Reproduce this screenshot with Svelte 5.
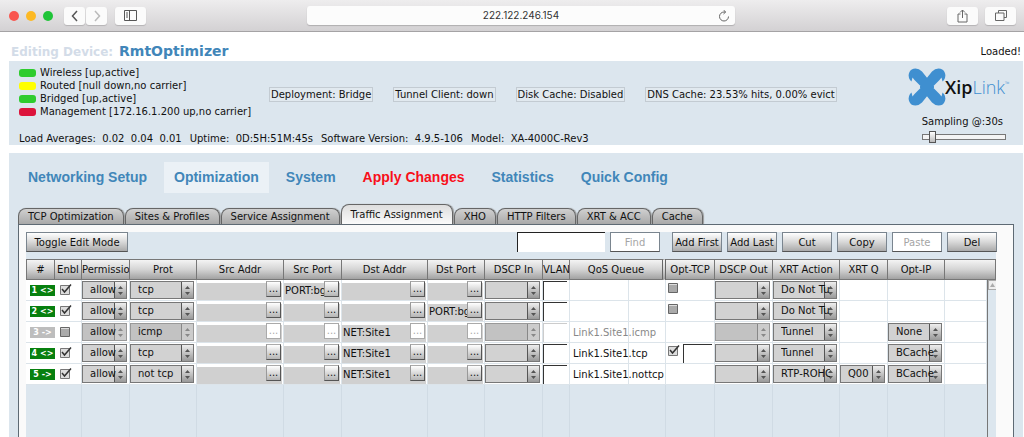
<script>
  const links = [
    { name: 'Wireless [up,active]', color: '#2ecc2e' },
    { name: 'Routed [null down,no carrier]', color: '#ffff00' },
    { name: 'Bridged [up,active]', color: '#2ecc2e' },
    { name: 'Management [172.16.1.200 up,no carrier]', color: '#dc143c' }
  ];
  const statuses = [
    'Deployment: Bridge',
    'Tunnel Client: down',
    'Disk Cache: Disabled',
    'DNS Cache: 23.53% hits, 0.00% evict'
  ];
  const facts = [
    ['Load Averages:', '0.02\u00a0 0.04\u00a0 0.01'],
    ['Uptime:', '0D:5H:51M:45s'],
    ['Software Version:', '4.9.5-106'],
    ['Model:', 'XA-4000C-Rev3']
  ];
  const menu = ['Networking Setup', 'Optimization', 'System', 'Apply Changes', 'Statistics', 'Quick Config'];
  const tabs = [
    'TCP Optimization', 'Sites & Profiles', 'Service Assignment', 'Traffic Assignment',
    'XHO', 'HTTP Filters', 'XRT & ACC', 'Cache'
  ];
  const actions = ['Add First', 'Add Last', 'Cut', 'Copy', 'Paste', 'Del'];
  const corners = ['', 'matrix(-1 0 0 1 38 0)', 'matrix(1 0 0 -1 0 38)', 'matrix(-1 0 0 -1 38 38)'];
  const columns = [
    ['#', 29], ['Enbl', 27], ['Permission', 48], ['Prot', 67], ['Src Addr', 87], ['Src Port', 58],
    ['Dst Addr', 86], ['Dst Port', 57], ['DSCP In', 58], ['VLAN', 27], ['QoS Queue', 96],
    ['Opt-TCP', 49], ['DSCP Out', 58], ['XRT Action', 67], ['XRT Q', 48], ['Opt-IP', 57]
  ];
  const rows = [
    { tag: '1 <>', on: true, prot: 'tcp', srcPort: 'PORT:bgp', opt: 'off', action: 'Do Not Tunnel' },
    { tag: '2 <>', on: true, prot: 'tcp', dstPort: 'PORT:bgp', opt: 'off', action: 'Do Not Tunnel' },
    { tag: '3 ->', on: false, prot: 'icmp', dst: 'NET:Site1', qos: 'Link1.Site1.icmp', action: 'Tunnel', ip: 'None' },
    { tag: '4 <>', on: true, prot: 'tcp', dst: 'NET:Site1', qos: 'Link1.Site1.tcp', opt: 'on', action: 'Tunnel', ip: 'BCache' },
    { tag: '5 ->', on: true, prot: 'not tcp', dst: 'NET:Site1', qos: 'Link1.Site1.nottcp', action: 'RTP-ROHC', q: 'Q00', ip: 'BCache' }
  ];
</script>

{#snippet pick(label, value, off)}
  <select aria-label={label} disabled={off}><option>{value}</option></select>
{/snippet}

{#snippet address(label, value, off)}
  <div class="addr">
    <input type="text" aria-label={label} value={value ?? ''} />
    <button disabled={off} aria-label="Choose {label}">...</button>
  </div>
{/snippet}

<div class="page">
  <header class="browser">
    <div class="lights"><i class="red"></i><i class="amber"></i><i class="green"></i></div>
    <div class="pair">
      <button class="chrome" aria-label="Back"><svg width="8" height="12" viewBox="0 0 8 12"><path d="M6 1 1.500 6 6 11" stroke="#555" /></svg></button>
      <button class="chrome" aria-label="Forward"><svg width="8" height="12" viewBox="0 0 8 12"><path d="M2 1 6.500 6 2 11" stroke="#bbb" /></svg></button>
    </div>
    <button class="chrome wide" aria-label="Sidebar"><svg width="13" height="11" viewBox="0 0 13 11"><path d="M.5.5h12v10H.5zM5.500.5v10M2 3h2M2 5h2M2 7h2" stroke="#555" stroke-width="1" /></svg></button>
    <div class="url">
      <span>222.122.246.154</span>
      <button aria-label="Reload"><svg width="12" height="12" viewBox="0 0 12 12"><path d="M10.500 6.500A4.500 4.500 0 1 1 6 2h1.500M5.500 0l2.200 2-2.200 2" stroke="#666" stroke-width="1" /></svg></button>
    </div>
    <div class="right">
      <button class="chrome wide" aria-label="Share"><svg width="11" height="14" viewBox="0 0 11 14"><path d="M3.500 5H1v8h9V5H7.500M5.500 9V1M3 3.500 5.500 1 8 3.500" stroke="#666" stroke-width="1" /></svg></button>
      <button class="chrome wide" aria-label="Tabs"><svg width="12" height="11" viewBox="0 0 12 11"><path d="M3.500 3V.5h8v7H9M.5 3h8.500v7.500H.5z" stroke="#666" stroke-width="1" /></svg></button>
    </div>
  </header>

  <div class="title">
    <h1><span>Editing Device:</span> RmtOptimizer</h1>
    <span class="loaded">Loaded!</span>
  </div>

  <section class="info">
    <div class="top">
      <ul class="links">
        {#each links as link}
          <li><i style="background: {link.color}"></i>{link.name}</li>
        {/each}
      </ul>
      <div class="statuses">
        {#each statuses as status}<span>{status}</span>{/each}
      </div>
    </div>
    <div class="facts">
      {#each facts as [label, value]}<span>{label}&nbsp; {value}</span>{/each}
    </div>
    <div class="brand">
      <div class="logo">
        <svg width="38" height="38" viewBox="0 0 38 38">
          {#each corners as corner}
            <path transform={corner} fill="#3f8fd0" d="M20 11 14 3.500Q11 .5 7.500 .5 3 .5 1.500 4 -.5 8 2 12L3.500 13.500 4.500 9.500 6.500 12 12.500 18 12 20 20 20Z" />
          {/each}
        </svg>
        <span class="word"><b>Xip</b>Link<sup>™</sup></span>
      </div>
      <label for="sampling">Sampling @:30s</label>
      <input id="sampling" type="range" min="0" max="100" value="9" />
    </div>
  </section>

  <main>
    <nav class="menu">
      {#each menu as item, i}
        <a href="#{i}" class:current={i === 1} class:alert={i === 3}>{item}</a>
      {/each}
    </nav>

    <div class="tabs" role="tablist">
      {#each tabs as tab, i}
        <button role="tab" aria-selected={i === 3} class:active={i === 3}>{tab}</button>
      {/each}
    </div>

    <section class="panel">
      <div class="toolbar">
        <button class="toggle">Toggle Edit Mode</button>
        <input type="text" class="search" aria-label="Find text" />
        <button disabled>Find</button>
        <div class="actions">
          {#each actions as action}<button disabled={action === 'Paste'}>{action}</button>{/each}
        </div>
      </div>

      <table>
        <colgroup>
          {#each columns as [, width]}<col style="width: {width}px" />{/each}
          <col />
          <col class="scrollcol" />
        </colgroup>
        <thead>
          <tr>
            {#each columns as [name]}<th class:grip={name === 'QoS Queue'}>{name}</th>{/each}
            <th colspan="2" aria-label="Spare"></th>
          </tr>
        </thead>
        <tbody>
          {#each rows as row, i}
            <tr class:off={!row.on}>
              <td><span class="tag">{row.tag}</span></td>
              <td><input type="checkbox" class="enable" aria-label="Enable rule {i + 1}" checked={row.on} /></td>
              <td>{@render pick('Permission', 'allow', !row.on)}</td>
              <td>{@render pick('Protocol', row.prot, !row.on)}</td>
              <td>{@render address('source address', '', !row.on)}</td>
              <td>{@render address('source port', row.srcPort, !row.on)}</td>
              <td>{@render address('destination address', row.dst, !row.on)}</td>
              <td>{@render address('destination port', row.dstPort, !row.on)}</td>
              <td>{@render pick('DSCP in', '', !row.on)}</td>
              <td><input type="text" class="inset" aria-label="VLAN" disabled={!row.on} /></td>
              <td class="qos">{row.qos ?? ''}</td>
              <td>
                {#if row.opt}
                  <div class="opt">
                    <input type="checkbox" aria-label="Optimize TCP" checked={row.opt === 'on'} />
                    {#if row.opt === 'on'}<input type="text" class="inset" aria-label="TCP option" />{/if}
                  </div>
                {/if}
              </td>
              <td>{@render pick('DSCP out', '', !row.on)}</td>
              <td>{@render pick('XRT action', row.action, false)}</td>
              <td>{#if row.q}{@render pick('XRT queue', row.q, false)}{/if}</td>
              <td>{#if row.ip}{@render pick('IP option', row.ip, false)}{/if}</td>
              <td></td>
              {#if i === 0}
                <td class="scroll" rowspan={rows.length + 1}><button aria-label="Scroll up"><svg width="5" height="4" viewBox="0 0 5 4"><path d="M0 4 2.500 0 5 4z" /></svg></button></td>
              {/if}
            </tr>
          {/each}
          <tr class="filler">
            {#each columns as _}<td></td>{/each}
            <td></td>
          </tr>
        </tbody>
      </table>
    </section>
  </main>
</div>

<style>
  :global(body) { margin: 0; background: #fff; }
  .page { min-height: 100vh; display: flex; flex-direction: column; font: 10px/13px "DejaVu Sans", Verdana, sans-serif; color: #111; }
  .page :global(*) { box-sizing: border-box; }
  button, input, select { font: inherit; color: inherit; margin: 0; padding: 0; border-radius: 0; }
  svg { display: block; fill: none; stroke-width: 1.5; }

  .browser { height: 32px; display: flex; align-items: center; padding: 0 8px 0 9px; background: linear-gradient(#eeedee, #d3d1d3); border-bottom: 1px solid #a5a3a5; }
  .lights { display: flex; gap: 7px; width: 55px; }
  .lights i { width: 10px; height: 10px; border-radius: 50%; }
  .red { background: #f9564f; }
  .amber { background: #fdb924; }
  .green { background: #1fc438; }
  .pair { display: flex; gap: 1px; margin-right: 8px; }
  .chrome { width: 21px; height: 18px; display: grid; place-items: center; border: 0; border-radius: 3px; background: #fbfbfb; box-shadow: 0 1px 1px #b5b3b5; }
  .chrome.wide { width: 31px; }
  .url { flex: 1; margin: 0 212px 0 161px; height: 19px; display: flex; align-items: center; padding: 0 5px 0 17px; background: #fcfcfc; border-radius: 3px; box-shadow: 0 1px 1px #b0aeb0; font-family: Inter, sans-serif; color: #333; }
  .url span { flex: 1; text-align: center; }
  .url button { border: 0; background: none; }
  .right { display: flex; gap: 7px; }

  .title { display: flex; justify-content: space-between; align-items: center; height: 29px; padding: 10px 3px 0 11px; }
  h1 { margin: 0; font: bold 14px/18px "DejaVu Sans", Verdana, sans-serif; color: #4186b9; }
  h1 span { font-size: 12px; color: #d3dce8; margin-right: 1px; }

  .info { position: relative; margin: 0 1px 8px 9px; padding: 5px 10px 0; background: #dce6ee; }
  .top { display: flex; }
  .links { list-style: none; margin: 0; padding: 0; width: 250px; white-space: nowrap; }
  .links li { display: flex; align-items: center; gap: 4px; height: 13px; }
  .links i { width: 17px; height: 8px; border-radius: 3px; }
  .statuses { display: flex; align-items: center; gap: 20px; padding-top: 4px; white-space: nowrap; }
  .statuses span { border: 1px solid #c3cbd2; padding: 0 1px; background: #e1e9ef; }
  .facts { display: flex; gap: 8px; margin-top: 14px; }
  .brand { position: absolute; right: 17px; top: 7px; width: 98px; display: flex; flex-direction: column; align-items: flex-end; }
  .logo { display: flex; align-items: center; align-self: flex-start; height: 38px; }
  .word { font: 18px/20px "Open Sans", sans-serif; font-weight: 300; color: #3f8fd0; margin-left: -1px; white-space: nowrap; }
  .word b { font-weight: 600; color: #111; }
  .word sup { font-size: 6px; line-height: 6px; vertical-align: 8px; }
  .brand label { margin: 9px 3px 3px 0; white-space: nowrap; }
  input[type='range'] { appearance: none; width: 84px; height: 12px; background: linear-gradient(transparent 3px, #777 3px, #777 9px, transparent 9px) left / 1px 12px no-repeat, linear-gradient(transparent 3px, #777 3px, #777 9px, transparent 9px) right / 1px 12px no-repeat, linear-gradient(transparent 3px, #777 3px, #777 4px, #f4f4f4 4px, #f4f4f4 8px, #777 8px, #777 9px, transparent 9px); }
  input[type='range']::-webkit-slider-thumb { appearance: none; width: 7px; height: 12px; border: 1px solid #555; background: linear-gradient(#fff, #bbb); }

  main { flex: 1; margin: 0 1px 0 9px; padding: 9px 9px 0; background: #dce6ee; display: flex; flex-direction: column; }
  .menu { display: flex; gap: 7px; font: bold 14px/31px "Liberation Sans", Arial, sans-serif; }
  .menu a { padding: 0 10px; color: #4186b9; text-decoration: none; white-space: nowrap; }
  .menu a.current { background: #ebf1f6; }
  .menu a.alert { color: #f8101a; }

  .tabs { display: flex; align-items: flex-end; gap: 1px; margin-top: 11px; height: 20px; }
  .tabs button { height: 16px; padding: 0 9px; border: 1px solid #666; border-bottom: 0; border-radius: 8px 8px 0 0; background: linear-gradient(#d0d0d0, #a9a9a9); white-space: nowrap; box-shadow: 1px 0 1px #999; }
  .tabs button.active { height: 20px; background: linear-gradient(#dedede, #fafafa); padding: 0 9px 1px; }

  .panel { flex: 1; padding: 7px 17px 0 7px; background: #fafafa; border: solid #5e6a74; border-width: 1px 1px 0; }
  .toolbar { display: flex; height: 27px; gap: 5px; align-items: flex-start; background: #dce6ee; }
  .toolbar button { width: 50px; height: 20px; border: 1px solid #7a858f; border-bottom-color: #555; background: linear-gradient(#fff, #d8d8d8 50%, #aaa); white-space: nowrap; }
  .toolbar button:disabled { background: #fff; color: #a5a5a5; }
  .toolbar .toggle { width: 102px; margin-right: auto; }
  .search { width: 88px; height: 20px; border: 0; border-top: 1px solid #222; border-left: 1px solid #222; background: #fff; }
  .actions { display: flex; gap: 5px; margin: 0 -1px 0 7px; }

  table { width: 100%; table-layout: fixed; border-collapse: separate; border-spacing: 0; }
  .scrollcol { width: 9px; }
  th { height: 21px; padding: 0; font-weight: normal; overflow: hidden; white-space: nowrap; border: 1px solid #777; border-width: 1px 1px 1px 0; background: linear-gradient(#f4f4f4, #d4d4d4 50%, #a2a2a2); }
  th:first-child { border-left-width: 1px; }
  th.grip { border-right: 4px double #666; }
  td { height: 21px; padding: 1px 2px 0 0; vertical-align: top; background: #fff; border-right: 1px solid #dce4ea; border-bottom: 1px solid #dce4ea; overflow: hidden; white-space: nowrap; }
  .filler td { height: 53px; background: #dce6ee; border-color: #d0dbe4; border-bottom: 0; }
  .filler td:last-child { border-right: 0; }
  .scroll { padding: 0; background: #dce6ee; border-right: 0; border-left: 1px solid #777; border-bottom: 0; }
  .scroll button { width: 9px; height: 10px; display: grid; place-items: center; border: 1px solid #aaa; background: #eee; }
  .scroll svg { fill: #aaa; }

  .tag { display: block; margin: 4px 0 0 4px; height: 11px; font: bold 8px/11px "DejaVu Sans", sans-serif; color: #fff; background: #07800f; text-align: center; }
  td:first-child { padding-right: 0; border-right: 0; }
  .off .tag { background: #bdbdbd; }
  select { appearance: none; display: block; width: 100%; height: 18px; padding: 0 6px 2px 7px; border: 1px solid #777; background: #d2d2d2 url("data:image/svg+xml,%3Csvg xmlns='http://www.w3.org/2000/svg' width='12' height='16'%3E%3Cdefs%3E%3ClinearGradient id='g' x2='0' y2='1'%3E%3Cstop stop-color='%23eee'/%3E%3Cstop offset='1' stop-color='%23999'/%3E%3C/linearGradient%3E%3C/defs%3E%3Cpath fill='url(%23g)' d='M0 0h12v16H0z'/%3E%3Cpath fill='%23555' d='M0 0h1v16H0zM4 7l2.500-3 2.500 3zM4 10l2.500 3 2.500-3z'/%3E%3C/svg%3E") no-repeat right top; color: #111; opacity: 1; text-overflow: clip; }
  select:disabled { border-color: #999; background-color: #c2c2c2; background-image: url("data:image/svg+xml,%3Csvg xmlns='http://www.w3.org/2000/svg' width='12' height='16'%3E%3Cpath fill='%23ccc' d='M0 0h12v16H0z'/%3E%3Cpath fill='%23888' d='M0 0h1v16H0zM4 7l2.500-3 2.500 3zM4 10l2.500 3 2.500-3z'/%3E%3C/svg%3E"); }
  .addr { display: flex; height: 19px; margin-right: -1px; padding-right: 1px; background: linear-gradient(transparent 2px, #d0d0d0 2px); }
  .addr input { flex: 1; min-width: 0; height: 18px; padding: 0 0 0 1px; border: 0; background: none; }
  .addr button { width: 15px; height: 16px; line-height: 14px; border: 1px solid #888; border-color: #aaa #555 #555 #999; background: linear-gradient(#fff, #b5b5b5); }
  .addr button:disabled { background: #fff; color: #aaa; border-color: #aaa; }
  .inset { display: block; width: 100%; height: 19px; border: 0; border-top: 1px solid #333; border-left: 1px solid #333; background: #fff; }
  .inset:disabled { border-color: #ccc; }
  .qos { padding: 4px 0 0 3px; background: linear-gradient(90deg, #fff 58px, #dce4ea 58px, #dce4ea 59px, #fff 59px); }
  .off .qos { color: #888; }
  .opt { display: flex; gap: 2px; padding-left: 2px; }
  .opt .inset { flex: 1; min-width: 0; }
  input[type='checkbox'] { appearance: none; display: block; flex: none; width: 13px; height: 12px; background: url("data:image/svg+xml,%3Csvg xmlns='http://www.w3.org/2000/svg' width='13' height='12'%3E%3Cpath fill='%23aaa' stroke='%23666' d='M.5 2.500h9v9h-9z'/%3E%3Cpath stroke='%23ddd' d='M1 3.500h8'/%3E%3C/svg%3E") no-repeat; }
  input[type='checkbox']:checked { background-image: url("data:image/svg+xml,%3Csvg xmlns='http://www.w3.org/2000/svg' width='13' height='12'%3E%3Cpath fill='%23ddd' stroke='%23777' d='M.5 2.500h9v9h-9z'/%3E%3Cpath fill='none' stroke='%23333' stroke-width='1.500' d='M2 6l2.500 3L11 1.500'/%3E%3C/svg%3E"); }
  input.enable[type='checkbox'] { margin: 2px 0 0 5px; }
</style>
